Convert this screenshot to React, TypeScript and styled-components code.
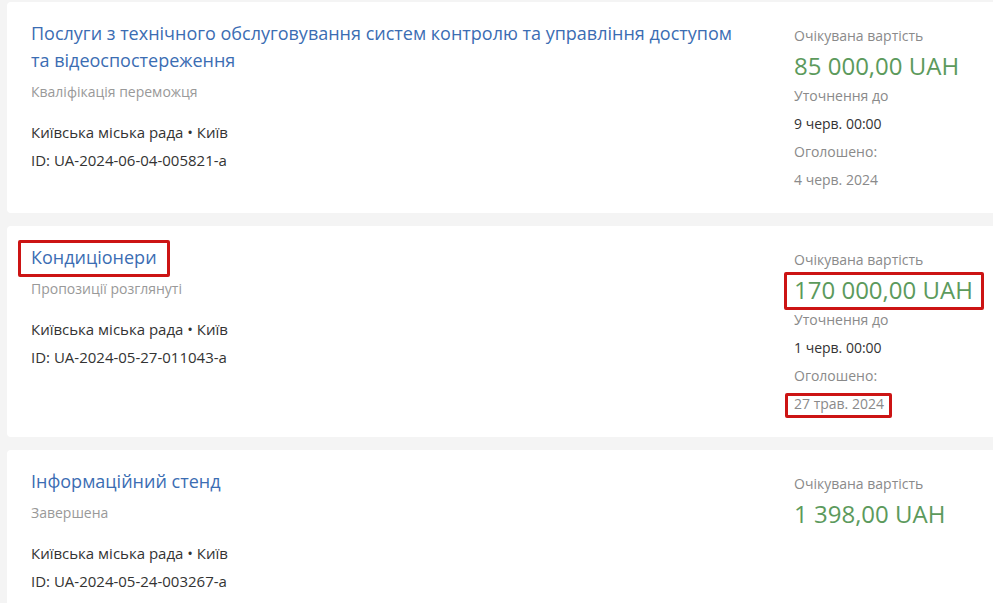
import React from 'react';
import styled, { createGlobalStyle } from 'styled-components';

const GlobalStyle = createGlobalStyle`
  html, body {
    margin: 0;
    padding: 0;
    background: #f4f4f4;
    overflow: hidden;
  }
  body {
    font-family: "Open Sans", "Noto Sans", sans-serif;
  }
`;

type Box = { top: number; right: number; bottom: number; left: number };

type Tender = {
  title: string;
  status: string;
  org: string;
  id: string;
  amount: string;
  enquiry?: string;
  published?: string;
  marks?: { title?: Box; amount?: Box; published?: Box };
};

const tenders: Tender[] = [
  {
    title:
      'Послуги з технічного обслуговування систем контролю та управління доступом та відеоспостереження',
    status: 'Кваліфікація переможця',
    org: 'Київська міська рада • Київ',
    id: 'ID: UA-2024-06-04-005821-a',
    amount: '85 000,00 UAH',
    enquiry: '9 черв. 00:00',
    published: '4 черв. 2024',
  },
  {
    title: 'Кондиціонери',
    status: 'Пропозиції розглянуті',
    org: 'Київська міська рада • Київ',
    id: 'ID: UA-2024-05-27-011043-a',
    amount: '170 000,00 UAH',
    enquiry: '1 черв. 00:00',
    published: '27 трав. 2024',
    marks: {
      title: { top: -4, right: -13, bottom: -6, left: -13 },
      amount: { top: -2, right: -11, bottom: -4, left: -10 },
      published: { top: 3, right: -8, bottom: 0, left: -9 },
    },
  },
  {
    title: 'Інформаційний стенд',
    status: 'Завершена',
    org: 'Київська міська рада • Київ',
    id: 'ID: UA-2024-05-24-003267-a',
    amount: '1 398,00 UAH',
  },
];

const Marked = ({ box, children }: { box?: Box; children: React.ReactNode }) =>
  box ? (
    <Highlight $top={box.top} $right={box.right} $bottom={box.bottom} $left={box.left}>
      {children}
    </Highlight>
  ) : (
    <>{children}</>
  );

export default function App() {
  return (
    <>
      <GlobalStyle />
      <List>
        {tenders.map((t) => (
          <Card key={t.id}>
            <Main>
              <Title href="#">
                <Marked box={t.marks?.title}>{t.title}</Marked>
              </Title>
              <Status>{t.status}</Status>
              <Org>{t.org}</Org>
              <Org>{t.id}</Org>
            </Main>
            <Side>
              <Label>Очікувана вартість</Label>
              <Amount>
                <Marked box={t.marks?.amount}>{t.amount}</Marked>
              </Amount>
              {t.enquiry && (
                <>
                  <Label>Уточнення до</Label>
                  <Value>{t.enquiry}</Value>
                </>
              )}
              {t.published && (
                <>
                  <Label>Оголошено:</Label>
                  <Label>
                    <Marked box={t.marks?.published}>{t.published}</Marked>
                  </Label>
                </>
              )}
            </Side>
          </Card>
        ))}
      </List>
    </>
  );
}

const List = styled.div`
  display: flex;
  flex-direction: column;
  gap: 13px;
  padding: 2px 0 0 7px;
  width: 1010px;
`;

const Card = styled.div`
  display: grid;
  grid-template-columns: 715px 1fr;
  column-gap: 48px;
  background: #ffffff;
  border-radius: 4px;
  padding: 18px 24px 19px 24px;
`;

const Main = styled.div`
  display: flex;
  flex-direction: column;
`;

const Title = styled.a`
  font-size: 18px;
  line-height: 27px;
  color: #3b6db3;
  text-decoration: none;
`;

const Status = styled.div`
  margin-top: 8px;
  margin-bottom: 16px;
  font-size: 14px;
  line-height: 20px;
  color: #999999;
`;

const Org = styled.div`
  font-size: 15px;
  line-height: 28px;
  color: #333333;
`;

const Side = styled.div`
  display: flex;
  flex-direction: column;
  align-items: flex-start;
  padding-top: 2px;
`;

const Label = styled.div`
  font-size: 14px;
  line-height: 28px;
  color: #8a8a8a;
`;

const Value = styled.div`
  font-size: 14px;
  line-height: 28px;
  color: #333333;
`;

const Amount = styled.div`
  font-size: 24px;
  line-height: 32px;
  color: #5c9a5c;
`;

const Highlight = styled.span<{ $top: number; $right: number; $bottom: number; $left: number }>`
  position: relative;
  display: inline-block;

  &::after {
    content: '';
    position: absolute;
    top: ${(p) => p.$top}px;
    right: ${(p) => p.$right}px;
    bottom: ${(p) => p.$bottom}px;
    left: ${(p) => p.$left}px;
    border: 3px solid #cc1414;
    border-radius: 2px;
    pointer-events: none;
  }
`;
